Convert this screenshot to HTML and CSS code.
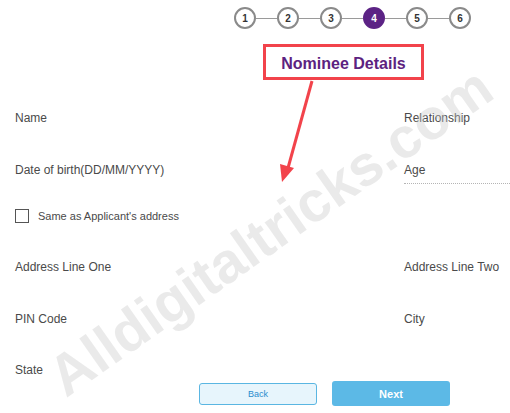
FILE: index.html
```html
<!DOCTYPE html>
<html lang="en">
<head>
    <meta charset="UTF-8">
    <title>Nominee Details</title>
    <link rel="stylesheet" href="styles.css">
</head>
<body>
    <div class="page">
        <div class="steps">
            <span class="step">1</span><span class="line"></span>
            <span class="step">2</span><span class="line"></span>
            <span class="step">3</span><span class="line"></span>
            <span class="step active">4</span><span class="line"></span>
            <span class="step">5</span><span class="line"></span>
            <span class="step">6</span>
        </div>

        <div class="title-box">Nominee Details</div>

        <div class="form">
            <div class="field r1">Name</div>
            <div class="field r1">Relationship</div>

            <div class="field r2">Date of birth(DD/MM/YYYY)</div>
            <div class="field r2 dotted">Age</div>

            <label class="check r3"><span class="box"></span>Same as Applicant's address</label>

            <div class="field r4">Address Line One</div>
            <div class="field r4">Address Line Two</div>

            <div class="field r5">PIN Code</div>
            <div class="field r5">City</div>

            <div class="field r6">State</div>
            <div class="field r6"></div>
        </div>

        <div class="buttons">
            <button class="btn back">Back</button>
            <button class="btn next">Next</button>
        </div>

        <!-- arrow from title box -->
        <svg class="arrow" width="510" height="413" viewBox="0 0 510 413">
            <line x1="312" y1="81" x2="288" y2="168" stroke="#f2434b" stroke-width="3"/>
            <polygon points="282,182 280,164 294,168" fill="#f2434b"/>
        </svg>

        <div class="watermark">Alldigitaltricks.com</div>
    </div>
</body>
</html>
```

FILE: styles.css
```css
*{
    margin:0;
    padding:0;
    box-sizing: border-box;
}
body{
    font-family: "Liberation Sans", Arial, sans-serif;
    background: #fff;
    color: #4a4a4a;
}
.page{
    position: relative;
    width: 510px;
    height: 413px;
    overflow: hidden;
}
/* 步骤条 */
.steps{
    display: flex;
    align-items: center;
    margin-left: 234px;
    padding-top: 7px;
    height: 29px;
}
.step{
    width: 22px;
    height: 22px;
    border: 2px solid #8a8a8a;
    border-radius: 50%;
    display: flex;
    justify-content: center;
    align-items: center;
    font-size: 10px;
    font-weight: bold;
    color: #333;
    background: #fff;
}
.step.active{
    background: #5c2385;
    border-color: #5c2385;
    color: #fff;
}
.line{
    width: 21px;
    height: 1px;
    background: #9a9a9a;
}
/* 标题框 */
.title-box{
    margin: 15px 0 0 263px;
    width: 161px;
    height: 36px;
    border: 3px solid #f2434b;
    color: #5c2280;
    font-weight: bold;
    font-size: 16px;
    display: flex;
    justify-content: center;
    align-items: center;
    padding-top: 3px;
}
.form{
    display: grid;
    grid-template-columns: 389px 1fr;
    grid-template-rows: 52px 46px 51px 52px 51px 18px;
    padding-left: 15px;
    margin-top: 31px;
    font-size: 12px;
}
.field{
    line-height: 14px;
}
.dotted{
    border-bottom: 1px dotted #b5b5b5;
    height: 21px;
}
.check{
    grid-column: 1 / 3;
    display: flex;
    align-items: flex-start;
    font-size: 11px;
    line-height: 14px;
}
.check .box{
    width: 14px;
    height: 14px;
    border: 1px solid #555;
    margin-right: 9px;
}
.buttons{
    display: flex;
    align-items: center;
    gap: 15px;
    margin-left: 199px;
}
.btn{
    width: 118px;
    border-radius: 3px;
    font-family: "Liberation Sans", Arial, sans-serif;
}
.back{
    height: 22px;
    background: #e7f5fc;
    border: 1px solid #5ab6e2;
    color: #2a8ccc;
    font-size: 9px;
}
.next{
    height: 25px;
    background: #5cb9e6;
    border: none;
    color: #fff;
    font-weight: bold;
    font-size: 11px;
}
.arrow{
    position: absolute;
    left: 0;
    top: 0;
}
/* 水印 */
.watermark{
    position: absolute;
    left: -10px;
    top: 198px;
    width: 560px;
    text-align: center;
    font-size: 57px;
    font-weight: bold;
    color: rgba(200,200,200,0.38);
    transform: rotate(-35deg);
    white-space: nowrap;
    pointer-events: none;
}
```
